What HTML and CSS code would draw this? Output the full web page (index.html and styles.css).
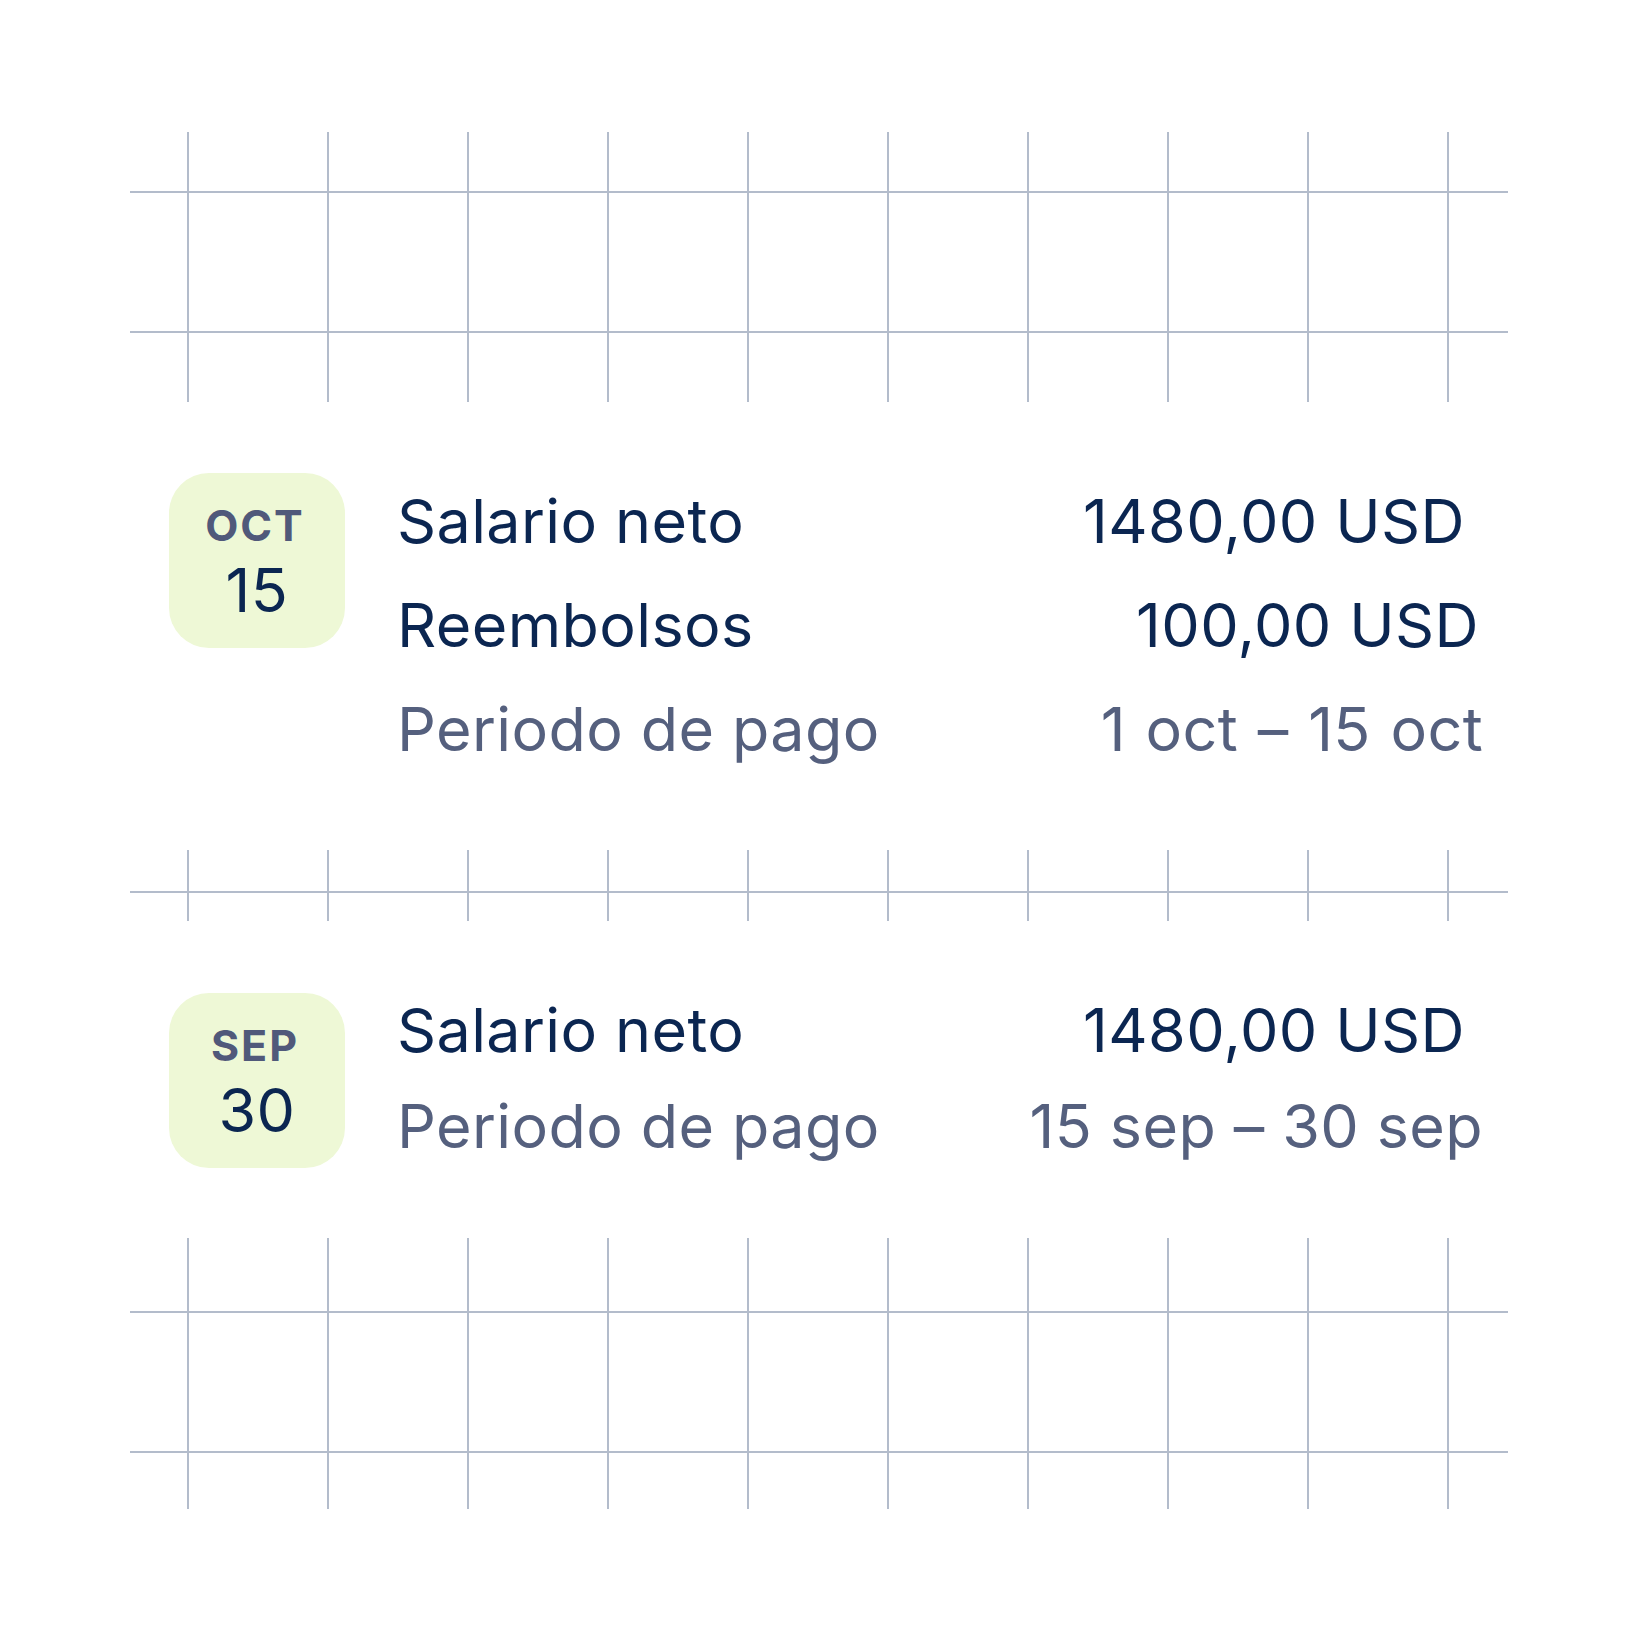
FILE: index.html
```html
<!DOCTYPE html>
<html lang="es">
<head>
<meta charset="utf-8">
<title>Pagos</title>
<link rel="stylesheet" href="styles.css">
</head>
<body>
  <main class="board">
    <div class="strip strip-top"></div>

    <section class="panel panel-oct">
      <div class="date-badge">
        <span class="date-month">OCT</span>
        <span class="date-day">15</span>
      </div>
      <div class="rows">
        <div class="row">
          <span class="label">Salario neto</span>
          <span class="value value-main">1480,00 USD</span>
        </div>
        <div class="row">
          <span class="label">Reembolsos</span>
          <span class="value value-small">100,00 USD</span>
        </div>
        <div class="row row-muted">
          <span class="label">Periodo de pago</span>
          <span class="value value-range">1 oct – 15 oct</span>
        </div>
      </div>
    </section>

    <div class="strip strip-mid"></div>

    <section class="panel panel-sep">
      <div class="date-badge">
        <span class="date-month">SEP</span>
        <span class="date-day">30</span>
      </div>
      <div class="rows">
        <div class="row">
          <span class="label">Salario neto</span>
          <span class="value value-main">1480,00 USD</span>
        </div>
        <div class="row row-muted">
          <span class="label">Periodo de pago</span>
          <span class="value">15 sep – 30 sep</span>
        </div>
      </div>
    </section>

    <div class="strip strip-bottom"></div>
  </main>
</body>
</html>
```

FILE: styles.css
```css
* {
  box-sizing: border-box;
}

html, body {
  margin: 0;
  padding: 0;
  background: #ffffff;
}

body {
  width: 1640px;
  height: 1640px;
  font-family: Inter, "Noto Sans", "Liberation Sans", sans-serif;
  color: #0b2651;
}

.board {
  margin: 132px 0 0 130px;
  width: 1378px;
  height: 1377px;
  display: flex;
  flex-direction: column;
  background-color: #ffffff;
  background-image:
    linear-gradient(to right, #b3bccb 2px, transparent 2px),
    linear-gradient(to bottom, #b3bccb 2px, transparent 2px);
  background-size: 140px 140px, 140px 140px;
  background-position: 57px 0, 0 59px;
}

.strip-top {
  height: 270px;
}

.strip-mid {
  height: 71px;
}

.strip-bottom {
  height: 271px;
}

.panel {
  background: #ffffff;
  display: flex;
  align-items: flex-start;
  padding-left: 39px;
  padding-right: 25px;
}

.panel-oct {
  height: 448px;
  padding-top: 67px;
}

.panel-sep {
  height: 317px;
  padding-top: 61px;
}

.date-badge {
  flex: none;
  width: 176px;
  height: 175px;
  border-radius: 40px;
  background: #eef8d6;
  display: flex;
  flex-direction: column;
  align-items: center;
  justify-content: center;
  padding-top: 3px;
  margin-right: 52px;
}

.panel-oct .date-badge {
  margin-top: 4px;
}

.panel-sep .date-badge {
  margin-top: 11px;
}

.date-month {
  font-size: 43px;
  line-height: 43px;
  font-weight: 700;
  color: #50597a;
  letter-spacing: 2px;
  margin-right: 4px;
  margin-bottom: 13px;
}

.date-day {
  font-size: 61px;
  line-height: 61px;
  font-weight: 400;
  color: #0b2651;
  letter-spacing: 0.5px;
}

.rows {
  flex: 1;
  display: flex;
  flex-direction: column;
}

.row {
  display: flex;
  justify-content: space-between;
  font-size: 61px;
  letter-spacing: 0.4px;
  line-height: 104px;
  white-space: nowrap;
}

.panel-sep .row {
  line-height: 96px;
}

.row-muted {
  color: #55607e;
}

.value-main {
  margin-right: 18px;
}

.value-small {
  margin-right: 4px;
}

.value-range {
  word-spacing: 2px;
}
```
